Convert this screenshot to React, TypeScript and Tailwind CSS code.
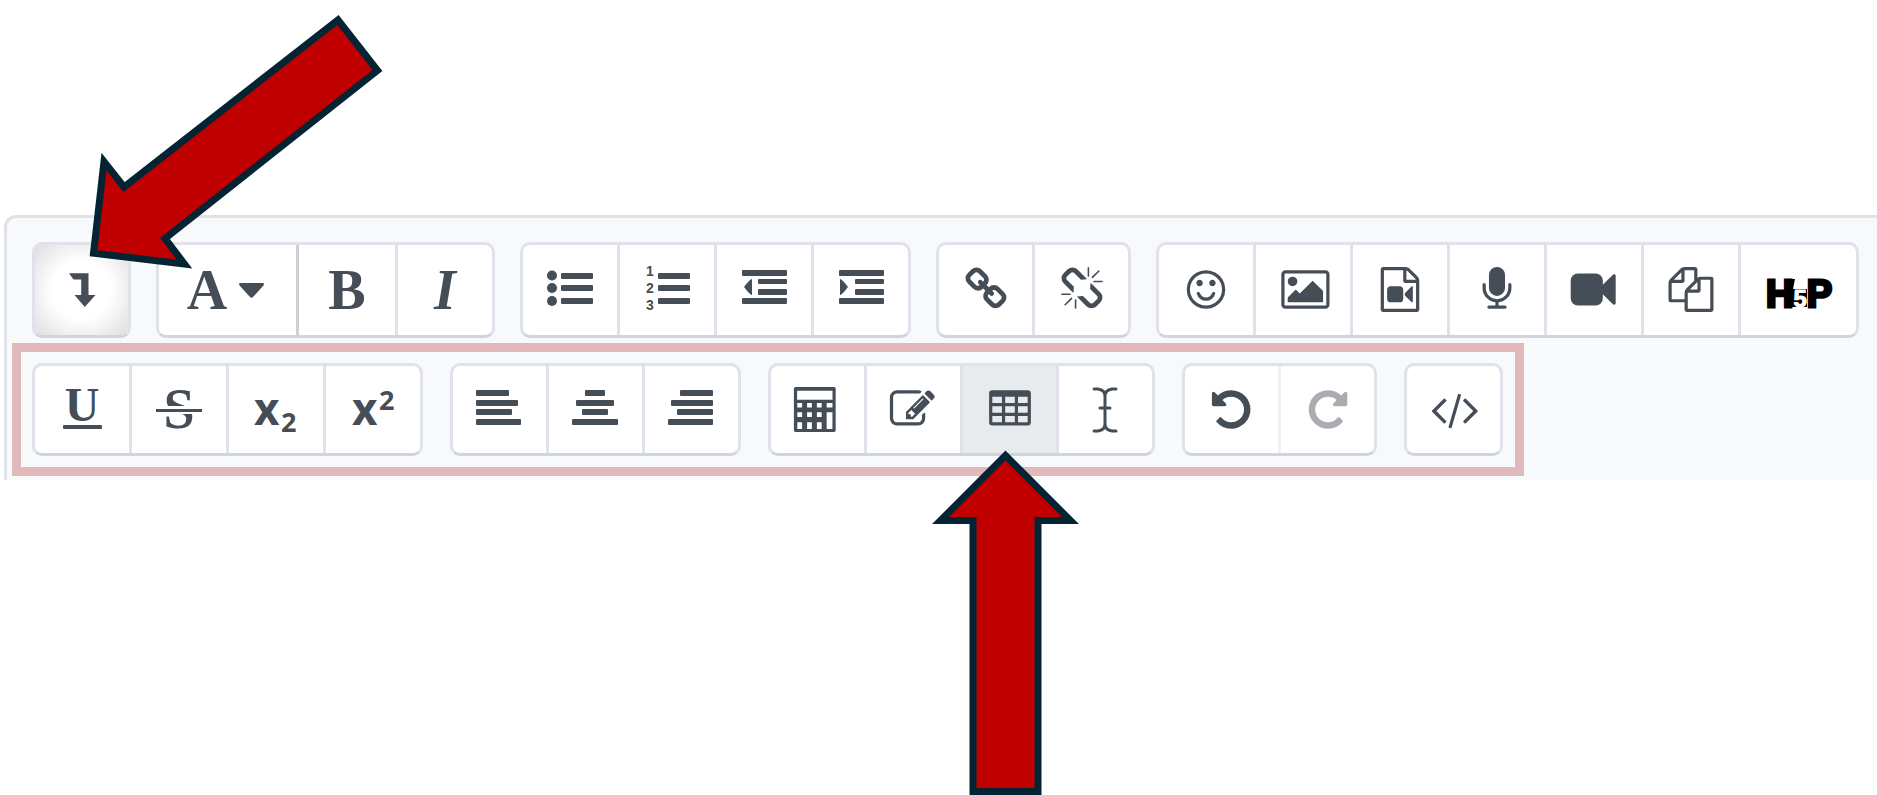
import type { ReactNode } from "react";
import clsx from "clsx";

type Tool = {
  label: string;
  icon: ReactNode;
  className?: string;
  pressed?: boolean;
  disabled?: boolean;
};

type ToolGroupProps = {
  label: string;
  tools: Tool[];
  cell?: string;
  className?: string;
};

function Icon({ children, wide = false }: { children: ReactNode; wide?: boolean }) {
  return (
    <svg
      aria-hidden
      viewBox={wide ? "0 0 66 48" : "0 0 48 48"}
      className={clsx("h-12 shrink-0 overflow-visible", wide ? "w-[66px]" : "w-12")}
      fill="currentColor"
    >
      {children}
    </svg>
  );
}

// glyphs on the 1792 unit grid
function Glyph({ d, shift = 0, flip = false }: { d: string; shift?: number; flip?: boolean }) {
  return (
    <Icon>
      <g transform="translate(1.5 1) scale(0.0251)">
        <path
          d={d}
          fillRule="evenodd"
          transform={flip ? "translate(1792 0) scale(-1 1)" : `translate(${shift} 0)`}
        />
      </g>
    </Icon>
  );
}

function Bars({ bars, children }: { bars: number[][]; children?: ReactNode }) {
  return (
    <Icon>
      {bars.map(([x, y, width, height]) => (
        <rect key={y} x={x} y={y} width={width} height={height} rx="1" />
      ))}
      {children}
    </Icon>
  );
}

const LINK =
  "M1520 1216q0-40-28-68l-208-208q-28-28-68-28-42 0-72 32 3 3 19 18.5t21.5 21.5 15 19 13 25.5 3.5 27.5q0 40-28 68t-68 28q-15 0-27.5-3.5t-25.5-13-19-15-21.5-21.5-18.5-19q-33 31-33 73 0 40 28 68l206 207q27 27 68 27 40 0 68-26l147-146q28-28 28-67zm-703-705q0-40-28-68l-206-207q-28-28-68-28-39 0-68 27l-147 146q-28 28-28 67 0 40 28 68l208 208q27 27 68 27 42 0 72-31-3-3-19-18.5t-21.5-21.5-15-19-13-25.5-3.5-27.5q0-40 28-68t68-28q15 0 27.5 3.5t25.5 13 19 15 21.5 21.5 18.5 19q33-31 33-73zm895 705q0 120-85 203l-147 146q-83 83-203 83-121 0-204-85l-206-207q-83-83-83-203 0-123 88-209l-88-88q-86 88-208 88-120 0-204-84l-208-208q-84-84-84-204t85-203l147-146q83-83 203-83 121 0 204 85l206 207q83 83 83 203 0 123-88 209l88 88q86-88 208-88 120 0 204 84l208 208q84 84 84 204z";
const UNLINK =
  "M503 1271l-256 256q-10 9-23 9-12 0-23-9-9-10-9-23t9-23l256-256q10-9 23-9t23 9q9 10 9 23t-9 23zm169 41v320q0 14-9 23t-23 9-23-9-9-23v-320q0-14 9-23t23-9 23 9 9 23zm-224-224q0 14-9 23t-23 9h-320q-14 0-23-9t-9-23 9-23 23-9h320q14 0 23 9t9 23zm1264 128q0 120-85 203l-147 146q-83 83-203 83-121 0-204-85l-334-335q-21-21-42-56l239-18 273 274q28 28 68 27.5t68-27.5l147-146q28-28 28-67 0-40-28-68l-274-275 18-239q35 21 56 42l336 336q84 86 84 204zm-617-724l-239 18-273-274q-28-28-68-28-39 0-68 27l-147 146q-28 28-28 67 0 40 28 68l274 274-18 240q-35-21-56-42l-336-336q-84-86-84-204 0-120 85-203l147-146q83-83 203-83 121 0 204 85l334 335q21 21 42 56zm633 84q0 14-9 23t-23 9h-320q-14 0-23-9t-9-23 9-23 23-9h320q14 0 23 9t9 23zm-544-544v320q0 14-9 23t-23 9-23-9-9-23v-320q0-14 9-23t23-9 23 9 9 23zm407 151l-256 256q-11 9-23 9t-23-9q-9-10-9-23t9-23l256-256q10-9 23-9t23 9q9 10 9 23t-9 23z";
const SMILE =
  "M1262 1075q-37 121-138 195t-228 74-228-74-138-195q-8-25 4-48.5t38-31.5q25-8 48.5 4t31.5 38q25 80 92.5 129.5t151.5 49.5 151.5-49.5 92.5-129.5q8-26 32-38t49-4 37 31.5 4 48.5zm-494-435q0 53-37.5 90.5t-90.5 37.5-90.5-37.5-37.5-90.5 37.5-90.5 90.5-37.5 90.5 37.5 37.5 90.5zm512 0q0 53-37.5 90.5t-90.5 37.5-90.5-37.5-37.5-90.5 37.5-90.5 90.5-37.5 90.5 37.5 37.5 90.5zm256 256q0-130-51-248.5t-136.5-204-204-136.5-248.5-51-248.5 51-204 136.5-136.5 204-51 248.5 51 248.5 136.5 204 204 136.5 248.5 51 248.5-51 204-136.5 136.5-204 51-248.5zm128 0q0 209-103 385.5t-279.5 279.5-385.5 103-385.5-103-279.5-279.5-103-385.5 103-385.5 279.5-279.5 385.5-103 385.5 103 279.5 279.5 103 385.5z";
const PICTURE =
  "M576 576q0 80-56 136t-136 56-136-56-56-136 56-136 136-56 136 56 56 136zm1024 384v448h-1408v-192l320-320 160 160 512-512zm96-704h-1600q-13 0-22.5 9.5t-9.5 22.5v1216q0 13 9.5 22.5t22.5 9.5h1600q13 0 22.5-9.5t9.5-22.5v-1216q0-13-9.5-22.5t-22.5-9.5zm160 32v1216q0 66-47 113t-113 47h-1600q-66 0-113-47t-47-113v-1216q0-66 47-113t113-47h1600q66 0 113 47t47 113z";
const FILE_VIDEO =
  "M1596 380q28 28 48 76t20 88v1152q0 40-28 68t-68 28h-1344q-40 0-68-28t-28-68v-1600q0-40 28-68t68-28h896q40 0 88 20t76 48zm-444-244v376h376q-10-29-22-41l-313-313q-12-12-41-22zm384 1528v-1024h-416q-40 0-68-28t-28-68v-416h-768v1536h1280zm-640-896q52 0 90 38t38 90v384q0 52-38 90t-90 38h-384q-52 0-90-38t-38-90v-384q0-52 38-90t90-38h384zm492 2q20 8 20 30v576q0 22-20 30-8 2-12 2-14 0-23-9l-265-266v-90l265-266q9-9 23-9 4 0 12 2z";
const MICROPHONE =
  "M1472 704v128q0 221-147.5 384.5t-364.5 187.5v132h256q26 0 45 19t19 45-19 45-45 19h-640q-26 0-45-19t-19-45 19-45 45-19h256v-132q-217-24-364.5-187.5t-147.5-384.5v-128q0-26 19-45t45-19 45 19 19 45v128q0 185 131.5 316.5t316.5 131.5 316.5-131.5 131.5-316.5v-128q0-26 19-45t45-19 45 19 19 45zm-256-384v512q0 132-94 226t-226 94-226-94-94-226v-512q0-132 94-226t226-94 226 94 94 226z";
const CAMERA =
  "M1664 352v1088q0 42-39 59-13 5-25 5-27 0-45-19l-403-403v166q0 119-84.5 203.5t-203.5 84.5h-704q-119 0-203.5-84.5t-84.5-203.5v-704q0-119 84.5-203.5t203.5-84.5h704q119 0 203.5 84.5t84.5 203.5v165l403-402q18-19 45-19 12 0 25 5 39 17 39 59z";
const FILES =
  "M1696 384q40 0 68 28t28 68v1216q0 40-28 68t-68 28h-960q-40 0-68-28t-28-68v-288h-544q-40 0-68-28t-28-68v-672q0-40 20-88t48-76l408-408q28-28 76-48t88-20h416q40 0 68 28t28 68v328q68-40 128-40h416zm-544 213l-299 299h299v-299zm-640-384l-299 299h299v-299zm196 647l316-316v-416h-384v416q0 40-28 68t-68 28h-416v640h512v-256q0-40 20-88t48-76zm956 804v-1152h-384v416q0 40-28 68t-68 28h-416v640h896z";
const EDIT =
  "M888 1184l116-116-152-152-116 116v56h96v96h56zm440-720q-16-16-33 1l-350 350q-17 17-1 33t33-1l350-350q17-17 1-33zm80 594v190q0 119-84.5 203.5t-203.5 84.5h-832q-119 0-203.5-84.5t-84.5-203.5v-832q0-119 84.5-203.5t203.5-84.5h832q63 0 117 25 15 7 18 23 3 17-9 29l-49 49q-14 14-32 8-23-6-45-6h-832q-66 0-113 47t-47 113v832q0 66 47 113t113 47h832q66 0 113-47t47-113v-126q0-13 9-22l64-64q15-15 35-7t20 29zm-96-738l288 288-672 672h-288v-288zm444 132l-92 92-288-288 92-92q28-28 68-28t68 28l152 152q28 28 28 68t-28 68z";
const CALCULATOR =
  "M128 0h1536q64 0 64 64v1664q0 64-64 64h-1536q-64 0-64-64v-1664q0-64 64-64zM192 150v360h1410v-360zM200 640v180h190v-180zM590 640v180h190v-180zM980 640v180h190v-180zM1370 640v180h230v-180zM200 1010v190h190v-190zM590 1010v190h190v-190zM980 1010v190h190v-190zM1370 1010v660h230v-660zM200 1400v270h190v-270zM590 1400v270h190v-270zM980 1400v270h190v-270z";
const TABLE =
  "M192 128h1408q128 0 128 128v1152q0 128-128 128h-1408q-128 0-128-128v-1152q0-128 128-128zM192 384v256h384v-256zM704 384v256h384v-256zM1216 384v256h384v-256zM192 768v256h384v-256zM704 768v256h384v-256zM1216 768v256h384v-256zM192 1152v256h384v-256zM704 1152v256h384v-256zM1216 1152v256h384v-256z";
const UNDO =
  "M1664 896q0 156-61 298t-164 245-245 164-298 61q-172 0-327-72.5t-264-204.5q-7-10-6.5-22.5t8.5-20.5l137-138q10-9 25-9 16 2 23 12 73 95 179 147t225 52q104 0 198.500-40.500t163.500-109.500 109.500-163.500 40.500-198.500-40.500-198.500-109.500-163.500-163.500-109.500-198.500-40.500q-98 0-188 35.500t-160 101.500l137 138q31 30 14 69-17 40-59 40h-448q-26 0-45-19t-19-45v-448q0-42 40-59 39-17 69 14l130 129q107-101 244.500-156.500t284.500-55.500q156 0 298 61t245 164 164 245 61 298z";
const CODE =
  "M681 1399l-50 50q-10 10-23 10t-23-10l-466-466q-10-10-10-23t10-23l466-466q10-10 23-10t23 10l50 50q10 10 10 23t-10 23l-393 393 393 393q10 10 10 23t-10 23zm591-1067l-373 1291q-4 13-15.5 19.5t-23.5 2.5l-62-17q-13-4-19.5-15.5t-2.5-24.5l373-1291q4-13 15.5-19.5t23.5-2.5l62 17q13 4 19.5 15.5t2.5 24.5zm657 651l-466 466q-10 10-23 10t-23-10l-50-50q-10-10-10-23t10-23l393-393-393-393q-10-10-10-23t10-23l50-50q10-10 23-10t23 10l466 466q10 10 10 23t-10 23z";

const LIST_BARS = [
  [15, 7, 32, 6],
  [15, 19, 32, 6],
  [15, 32, 32, 6],
];

const INDENT_BARS = [
  [2, 4, 45, 6],
  [18, 13, 29, 5],
  [18, 23, 29, 6],
  [2, 32, 45, 6],
];

const serif = "font-['Liberation_Serif',serif] font-bold";
const sans = "font-['Open_Sans',sans-serif] font-bold";
const digit = "font-['Liberation_Sans',sans-serif] text-[14px] font-bold";

const toggle: Tool[] = [
  {
    label: "Show more buttons",
    icon: (
      <Icon>
        <path d="M11 7.300H30.500V29h7L26.800 41 16.500 29h6.700V13.500H15.500z" />
      </Icon>
    ),
    className: "bg-[radial-gradient(circle,#ffffff_45%,#dedede_100%)]",
  },
];

const textStyle: Tool[] = [
  {
    label: "Paragraph styles",
    icon: (
      <>
        <span className={`${serif} text-[56px] leading-12`}>A</span>
        <svg aria-hidden viewBox="0 0 25 15" className="h-[15px] w-[25px]" fill="currentColor">
          <path d="M1 0h23q2 1 0 3L14 14q-1.500 1.500-3 0L1 3Q-1 1 1 0z" />
        </svg>
      </>
    ),
    className: "w-[133px] gap-3 pr-1",
  },
  {
    label: "Bold",
    icon: <span className={`${serif} text-[56px] leading-12`}>B</span>,
    className: "w-[96px] border-l-[#cfd0d2]",
  },
  { label: "Italic", icon: <span className={`${serif} text-[56px] leading-12 italic`}>I</span> },
];

const lists: Tool[] = [
  {
    label: "Unordered list",
    icon: (
      <Bars bars={LIST_BARS}>
        <circle cx="6" cy="9.500" r="5" />
        <circle cx="6" cy="22" r="5" />
        <circle cx="6" cy="35" r="5" />
      </Bars>
    ),
  },
  {
    label: "Ordered list",
    icon: (
      <Bars bars={LIST_BARS}>
        <text x="3" y="10" className={digit}>1</text>
        <text x="3" y="27" className={digit}>2</text>
        <text x="3" y="44" className={digit}>3</text>
      </Bars>
    ),
  },
  {
    label: "Outdent",
    icon: (
      <Bars bars={INDENT_BARS}>
        <path d="M12 13v16q-2 0-8-8 6-8 8-8z" />
      </Bars>
    ),
  },
  {
    label: "Indent",
    icon: (
      <Bars bars={INDENT_BARS}>
        <path d="M3 13v16q2 0 8-8-6-8-8-8z" />
      </Bars>
    ),
  },
];

const links: Tool[] = [
  { label: "Link", icon: <Glyph d={LINK} /> },
  { label: "Unlink", icon: <Glyph d={UNLINK} /> },
];

const media: Tool[] = [
  { label: "Emoji picker", icon: <Glyph d={SMILE} /> },
  { label: "Insert or edit image", icon: <Glyph d={PICTURE} shift={96} /> },
  { label: "Insert or edit an audio/video file", icon: <Glyph d={FILE_VIDEO} /> },
  { label: "Record audio", icon: <Glyph d={MICROPHONE} /> },
  { label: "Record video", icon: <Glyph d={CAMERA} shift={96} /> },
  { label: "Manage files", icon: <Glyph d={FILES} /> },
  {
    label: "Insert H5P",
    icon: (
      <Icon wide>
        {/* dark plate the white numeral is cut out of */}
        <path d="M23 13h6l-2 10h14v18H23z" fill="#000" />
        <text x="0" y="41" className="fill-black font-['Liberation_Sans',sans-serif] font-bold">
          <tspan className="text-[38px]" stroke="#000" strokeWidth="3">H</tspan>
          <tspan className="fill-white text-[24px]" stroke="#fff" strokeWidth="1">5</tspan>
          <tspan className="text-[38px]" stroke="#000" strokeWidth="3">P</tspan>
        </text>
      </Icon>
    ),
    className: "w-[115px]",
  },
];

const formatting: Tool[] = [
  {
    label: "Underline",
    icon: (
      <Icon>
        <text x="24" y="35" textAnchor="middle" className={`${serif} text-[48px]`}>U</text>
        <rect x="5" y="39" width="39" height="4" rx="1" />
      </Icon>
    ),
  },
  {
    label: "Strike through",
    icon: (
      <Icon>
        <text x="24" y="42" textAnchor="middle" className={`${serif} text-[56px]`}>S</text>
        <rect x="1" y="20" width="46" height="8" fill="#fff" />
        <rect x="1" y="23" width="46" height="3" />
      </Icon>
    ),
  },
  {
    label: "Subscript",
    icon: (
      <Icon>
        <text x="2" y="39" className={`${sans} text-[44px]`}>x</text>
        <text x="29" y="46" className={`${sans} text-[27px]`}>2</text>
      </Icon>
    ),
  },
  {
    label: "Superscript",
    icon: (
      <Icon>
        <text x="3" y="39" className={`${sans} text-[44px]`}>x</text>
        <text x="30" y="24" className={`${sans} text-[27px]`}>2</text>
      </Icon>
    ),
  },
];

const alignment: Tool[] = [
  {
    label: "Left align",
    icon: <Bars bars={[[0, 4, 33, 6], [0, 14, 42, 6], [0, 23, 36, 6], [0, 33, 45, 6]]} />,
  },
  {
    label: "Center",
    icon: <Bars bars={[[13, 4, 20, 6], [4, 14, 38, 6], [10, 23, 26, 6], [0, 33, 46, 6]]} />,
  },
  {
    label: "Right align",
    icon: <Bars bars={[[12, 4, 33, 6], [3, 14, 42, 6], [9, 23, 36, 6], [0, 33, 45, 6]]} />,
  },
];

const insert: Tool[] = [
  { label: "Equation editor", icon: <Glyph d={CALCULATOR} shift={-128} /> },
  { label: "Insert character", icon: <Glyph d={EDIT} shift={-64} /> },
  { label: "Table", icon: <Glyph d={TABLE} />, className: "bg-[#e8ebee]", pressed: true },
  {
    label: "Clear formatting",
    icon: (
      <Icon>
        <path
          d="M12 3h4q7 1 7 7v28q0 6-7 7h-4M34 3h-4q-7 1-7 7M23 38q0 6 7 7h4M18 22h10"
          fill="none"
          stroke="currentColor"
          strokeWidth="3"
          strokeLinecap="round"
        />
      </Icon>
    ),
  },
];

const history: Tool[] = [
  { label: "Undo", icon: <Glyph d={UNDO} shift={-32} /> },
  {
    label: "Redo",
    icon: <Glyph d={UNDO} flip />,
    className: "border-l-[#eef0f2] text-[#a9acb0]",
    disabled: true,
  },
];

const source: Tool[] = [{ label: "HTML", icon: <Glyph d={CODE} shift={-96} /> }];

function ToolGroup({ label, tools, cell = "w-[93px]", className }: ToolGroupProps) {
  return (
    <div
      role="group"
      aria-label={label}
      className={clsx(
        "flex shrink-0 overflow-hidden rounded-[10px] border-[3px] border-[#dfe2e8] border-b-[#d0d5dc] bg-white",
        className,
      )}
    >
      {tools.map((tool, index) => (
        <button
          key={tool.label}
          type="button"
          aria-label={tool.label}
          aria-pressed={tool.pressed}
          disabled={tool.disabled}
          className={clsx(
            "box-content flex items-center justify-center",
            index > 0 && "border-l-[3px]",
            !tool.className?.includes("border-l-") && "border-[#dfe2e8]",
            !tool.className?.includes("w-[") && cell,
            tool.className,
          )}
        >
          {tool.icon}
        </button>
      ))}
    </div>
  );
}

export default function App() {
  return (
    <main className="relative min-h-screen overflow-hidden bg-white pt-[215px] pl-1">
      <div
        role="toolbar"
        aria-label="Editor toolbar"
        className="overflow-hidden rounded-tl-xl border-t-[3px] border-l-[3px] border-[#dfe2e8] bg-[#f8f9fb] pt-6 pb-1 pl-[5px] text-[#454d56]"
      >
        <div className="flex gap-[25px] pl-5">
          <ToolGroup label="Toggle" tools={toggle} className="h-24" />
          <ToolGroup label="Text style" tools={textStyle} cell="w-[94px]" className="h-24" />
          <ToolGroup label="Lists" tools={lists} cell="w-[94px]" className="h-24" />
          <ToolGroup label="Links" tools={links} className="h-24" />
          <ToolGroup label="Media" tools={media} cell="w-[94px]" className="h-24" />
        </div>
        <div className="mt-[5px] flex w-fit gap-[27px] border-[9px] border-[#e2b9ba] py-[11px] pr-3 pl-[11px]">
          <ToolGroup label="Formatting" tools={formatting} cell="w-[94px]" className="h-[93px]" />
          <ToolGroup label="Alignment" tools={alignment} className="h-[93px]" />
          <ToolGroup label="Insert" tools={insert} className="h-[93px]" />
          <ToolGroup label="History" tools={history} className="h-[93px]" />
          <ToolGroup label="Source" tools={source} className="h-[93px]" />
        </div>
      </div>

      {/* callout arrows over the toolbar */}
      <svg
        aria-hidden
        viewBox="86 11 300 261"
        className="pointer-events-none absolute top-[11px] left-[86px] h-[261px] w-[300px]"
      >
        <path
          d="M338 20L377.500 70.500 165 238.500 184.500 264 93.500 253.300 104 161.500 124 187z"
          fill="#c00000"
          stroke="#042433"
          strokeWidth="7"
          strokeMiterlimit="10"
        />
      </svg>
      <svg
        aria-hidden
        viewBox="930 448 152 347"
        className="pointer-events-none absolute top-[448px] left-[930px] h-[347px] w-[152px]"
      >
        <path
          d="M1005.500 455.500L1070.500 520.500H1038V791.500H973V520.500H940.500z"
          fill="#c00000"
          stroke="#042433"
          strokeWidth="7"
          strokeMiterlimit="10"
        />
      </svg>
    </main>
  );
}
